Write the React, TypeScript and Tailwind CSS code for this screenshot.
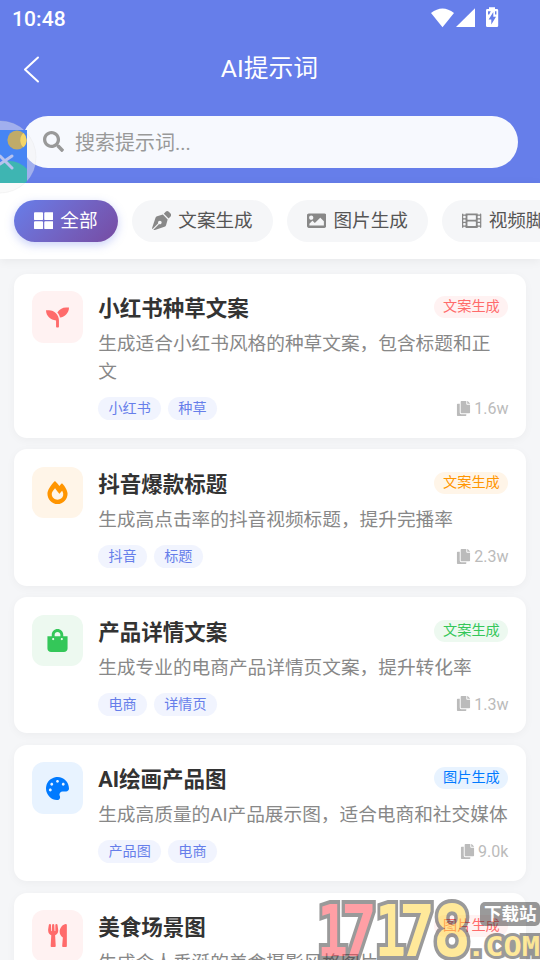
import { clsx } from 'clsx';
import type { IconType } from 'react-icons';
import {
    FaCopy,
    FaFilm,
    FaFireAlt,
    FaImage,
    FaPalette,
    FaPenNib,
    FaSearch,
    FaSeedling,
    FaShoppingBag,
    FaThLarge,
    FaUtensils,
} from 'react-icons/fa';

interface Prompt {
    title: string;
    desc: string;
    category: string;
    tags: string[];
    uses: string;
    icon: IconType;
    color: string;
}

const tabs: { label: string; icon: IconType }[] = [
    { label: '全部', icon: FaThLarge },
    { label: '文案生成', icon: FaPenNib },
    { label: '图片生成', icon: FaImage },
    { label: '视频脚本', icon: FaFilm },
];

const red = 'bg-[#fff2f2] text-[#ff6b6b]';
const orange = 'bg-[#fff5e8] text-[#ff9500]';
const green = 'bg-[#edf9f0] text-[#34c759]';
const blue = 'bg-[#e8f3ff] text-[#007aff]';

const prompts: Prompt[] = [
    {
        title: '小红书种草文案',
        desc: '生成适合小红书风格的种草文案，包含标题和正文',
        category: '文案生成',
        tags: ['小红书', '种草'],
        uses: '1.6w',
        icon: FaSeedling,
        color: red,
    },
    {
        title: '抖音爆款标题',
        desc: '生成高点击率的抖音视频标题，提升完播率',
        category: '文案生成',
        tags: ['抖音', '标题'],
        uses: '2.3w',
        icon: FaFireAlt,
        color: orange,
    },
    {
        title: '产品详情文案',
        desc: '生成专业的电商产品详情页文案，提升转化率',
        category: '文案生成',
        tags: ['电商', '详情页'],
        uses: '1.3w',
        icon: FaShoppingBag,
        color: green,
    },
    {
        title: 'AI绘画产品图',
        desc: '生成高质量的AI产品展示图，适合电商和社交媒体',
        category: '图片生成',
        tags: ['产品图', '电商'],
        uses: '9.0k',
        icon: FaPalette,
        color: blue,
    },
    {
        title: '美食场景图',
        desc: '生成令人垂涎的美食摄影风格图片',
        category: '图片生成',
        tags: [],
        uses: '',
        icon: FaUtensils,
        color: red,
    },
];

function StatusBar() {
    return (
        <div className="flex h-9 items-center justify-between pr-[41px] pl-[12px] pt-[2px]">
            <span className="text-[21px] font-medium leading-none tracking-[0.1px]">10:48</span>
            <svg width="68" height="22" viewBox="0 0 68 22" fill="currentColor" className="-mt-[3px]">
                <path d="M0 6Q11.5 -3 23 6L11.5 20.2Z" />
                <path d="M44 1.2V20H25Z" />
                <path
                    fillRule="evenodd"
                    d="M58 0.3h6v1.8h1.8q1.4 0 1.4 1.4v15.2q0 1.4-1.4 1.4h-9.4q-1.4 0-1.4-1.4V3.5q0-1.4 1.4-1.4h1.6zM62.3 5l-4.7 7.6h2.7v5l4.7-7.8h-2.7zM57 4.2h2.8l-1.6 3.2H57zM64 4.2h1.4v3.2H64z"
                />
            </svg>
        </div>
    );
}

function Header() {
    return (
        <header className="h-[183px] bg-[#667eea] text-white">
            <StatusBar />
            <div className="flex h-[66px] items-center px-[22px]">
                <svg width="20" height="28" viewBox="0 0 20 28" fill="none" stroke="currentColor" strokeWidth="2" className="-mt-px">
                    <path d="M16 2.5L3 14.5L16 26.5" strokeLinecap="round" strokeLinejoin="round" />
                </svg>
                <h1 className="flex-1 pr-[21px] text-center text-[24.8px] leading-9">AI提示词</h1>
            </div>
            <div className="mx-[22px] mt-[14px] flex h-[52px] items-center gap-[11px] rounded-full bg-[#f7f9fe] pl-[21px]">
                <FaSearch className="-mt-[2px] size-[21px] text-[#999]" />
                <span className="pt-px text-[20px] leading-7 text-[#999]">搜索提示词...</span>
            </div>
        </header>
    );
}

function Tabs() {
    return (
        <nav className="relative flex h-[76px] items-start gap-[14.5px] overflow-hidden bg-white pt-[17px] pl-[14px] shadow-[0_2px_10px_rgba(0,0,0,0.06)]">
            {tabs.map(({ label, icon: Icon }, i) => (
                <div
                    key={label}
                    className={clsx(
                        'flex h-[42px] shrink-0 items-center gap-[7px] rounded-full px-[20px] text-[18.6px]',
                        i === 0
                            ? 'bg-linear-135 from-[#667eea] to-[#764ba2] text-white shadow-[0_3px_10px_rgba(102,126,234,0.35)]'
                            : 'bg-[#f5f6f8] text-[#555]'
                    )}
                >
                    <Icon className={clsx('-mt-px size-[19.3px]', i > 0 && 'text-[#888]')} />
                    <span className="leading-7">{label}</span>
                </div>
            ))}
        </nav>
    );
}

function PromptCard({ prompt }: { prompt: Prompt }) {
    const Icon = prompt.icon;
    return (
        <article className="flex shrink-0 gap-[14.8px] rounded-[13px] bg-white p-[17.6px] pl-[18px] shadow-[0_2px_10px_rgba(0,0,0,0.04)]">
            <div className={clsx('flex size-[51.4px] shrink-0 items-center justify-center rounded-[12px]', prompt.color)}>
                <Icon className="size-[23px]" />
            </div>
            <div className="min-w-0 flex-1">
                <div className="flex h-[32px] items-center justify-between">
                    <h2 className="pt-[4px] text-[21.5px] font-bold leading-8 text-[#333]">{prompt.title}</h2>
                    <span className={clsx('h-[22px] rounded-full px-[8.6px] text-[14.2px] leading-[20.5px]', prompt.color)}>
                        {prompt.category}
                    </span>
                </div>
                <p className="mt-[7px] text-[18.68px] leading-[28px] text-[#888]">{prompt.desc}</p>
                <div className="mt-[11px] flex h-[23px] items-center gap-[7px]">
                    {prompt.tags.map((tag) => (
                        <span key={tag} className="h-[23px] rounded-full bg-[#f1f4fe] px-[10.3px] text-[14.1px] leading-[22px] text-[#667eea]">
                            {tag}
                        </span>
                    ))}
                    {prompt.uses && (
                        <span className="ml-auto flex items-center gap-[3px] text-[16px] leading-none text-[#bbb]">
                            <FaCopy className="-mt-px size-[15px]" />
                            <span className="pt-px">{prompt.uses}</span>
                        </span>
                    )}
                </div>
            </div>
        </article>
    );
}

function FloatingBall() {
    return (
        <svg className="absolute top-[119px] left-0" width="40" height="78" viewBox="0 0 40 78">
            <circle cx="0" cy="38" r="36" fill="#f4f4f4" fillOpacity="0.42" stroke="#ddd" strokeOpacity="0.25" />
            <path d="M0 11H27V64H0Z" fill="#4685f4" />
            <path d="M0 44Q15 38 27 50V61Q27 64 24 64H0Z" fill="#3eb5b2" />
            <circle cx="17" cy="21" r="9.6" fill="#c0ab68" />
            <path d="M23.5 14A9.6 9.6 0 0 0 23.5 28.3Q26.6 25.5 26.6 21Q26.6 17 23.5 14Z" fill="#f4d568" />
            <path d="M0 37L12 49M0 45L12 37" stroke="#b7c2ee" strokeWidth="3" strokeLinecap="round" />
        </svg>
    );
}

const digits = [
    { char: '1', x: 3, width: 31, fill: '#ff414d' },
    { char: '7', x: 27, width: 36, fill: '#ff414d' },
    { char: '1', x: 61, width: 31, fill: '#ffd537' },
    { char: '7', x: 85, width: 36, fill: '#ffd537' },
    { char: '8', x: 119, width: 38, fill: '#ffd537' },
];

function SiteMark() {
    return (
        <svg
            className="absolute right-0 bottom-0 opacity-50"
            width="226"
            height="62"
            viewBox="0 0 226 62"
            fontFamily="'DejaVu Sans Mono', monospace"
            fontWeight="700"
            stroke="#373737"
            paintOrder="stroke"
        >
            <g fontSize="72" strokeWidth="8">
                {digits.map(({ char, x, width, fill }) => (
                    <text key={x} x={x} y="58" fill={fill} textLength={width} lengthAdjust="spacingAndGlyphs">
                        {char}
                    </text>
                ))}
            </g>
            <text x="153" y="58" fill="#ffd537" fontSize="27" strokeWidth="6" textLength="73" lengthAdjust="spacingAndGlyphs">
                .COM
            </text>
            <rect x="166" y="4" width="60" height="24" rx="5" fill="#373737" stroke="none" />
            <text x="170" y="22" fontFamily="'Noto Sans CJK SC', sans-serif" fontSize="17.5" fill="#fff" stroke="none">
                下载站
            </text>
        </svg>
    );
}

export default function App() {
    return (
        <div className="relative h-[960px] w-[540px] overflow-hidden bg-[#f5f6f8] font-[Roboto,'Noto_Sans_CJK_SC',sans-serif]">
            <Header />
            <Tabs />
            <main className="flex flex-col gap-[11.5px] px-[14px] pt-[14.8px]">
                {prompts.map((prompt) => (
                    <PromptCard key={prompt.title} prompt={prompt} />
                ))}
            </main>
            <FloatingBall />
            <SiteMark />
        </div>
    );
}
